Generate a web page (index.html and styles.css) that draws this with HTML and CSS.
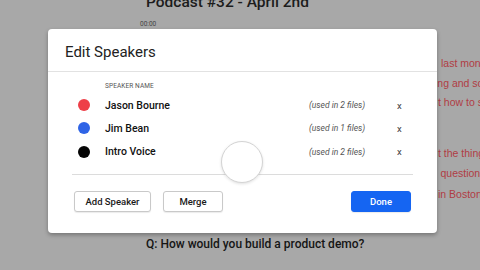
FILE: index.html
```html
<!DOCTYPE html>
<html>
<head>
<meta charset="utf-8">
<link rel="stylesheet" href="styles.css">
</head>
<body>
<div class="page">
  <div class="title">Podcast #32 - April 2nd</div>
  <div class="time">00:00</div>
  <div class="transcript group1">
    <div class="line l1">last month we talked</div>
    <div class="line l2">ing and some</div>
    <div class="line l3">t how to say</div>
  </div>
  <div class="transcript group2">
    <div class="line l4">t the things</div>
    <div class="line l5">question</div>
    <div class="line l6">in Boston</div>
  </div>
  <div class="question">Q: How would you build a product demo?</div>
</div>

<div class="modal">
  <div class="modal-header">Edit Speakers</div>
  <div class="modal-body">
    <div class="col-label">SPEAKER NAME</div>
    <div class="row">
      <span class="dot red"></span>
      <span class="name">Jason Bourne</span>
      <span class="usage">(used in 2 files)</span>
      <span class="remove">x</span>
    </div>
    <div class="row">
      <span class="dot blue"></span>
      <span class="name">Jim Bean</span>
      <span class="usage">(used in 1 files)</span>
      <span class="remove">x</span>
    </div>
    <div class="row">
      <span class="dot black"></span>
      <span class="name">Intro Voice</span>
      <span class="usage">(used in 2 files)</span>
      <span class="remove">x</span>
    </div>
    <div class="divider"></div>
  </div>
  <div class="modal-footer">
    <button class="btn add">Add Speaker</button>
    <button class="btn merge">Merge</button>
    <span class="spacer"></span>
    <button class="btn done">Done</button>
  </div>
  <div class="touch"></div>
</div>
</body>
</html>
```
FILE: styles.css
```css
html, body {
  margin: 0;
  padding: 0;
}
body {
  width: 480px;
  height: 270px;
  overflow: hidden;
  background: #a8a8a8;
  font-family: Roboto, "Liberation Sans", sans-serif;
  position: relative;
}
.page {
  padding-left: 146px;
  display: flex;
  flex-direction: column;
}
.title {
  font-size: 15.5px;
  line-height: 20px;
  font-weight: 500;
  color: #1c1c1c;
  margin-top: -8px;
  white-space: nowrap;
}
.time {
  font-size: 6.5px;
  line-height: 10px;
  color: #444;
  margin-top: 7px;
  margin-left: -6px;
}
.transcript {
  font-family: "Liberation Sans", Arial, sans-serif;
  font-size: 10.5px;
  color: #b03c44;
  white-space: nowrap;
}
.group1 {
  line-height: 19.5px;
  margin-top: 25px;
}
.group2 {
  line-height: 20.5px;
  margin-top: 30px;
}
.l1 { padding-left: 295px; }
.l2 { padding-left: 289px; }
.l3 { padding-left: 292px; }
.l4 { padding-left: 292px; }
.l5 { padding-left: 294.5px; }
.l6 { padding-left: 292px; }
.question {
  font-size: 12px;
  line-height: 16px;
  font-weight: 500;
  color: #151515;
  margin-top: 31.5px;
  white-space: nowrap;
}

.modal {
  position: absolute;
  left: 48px;
  top: 29px;
  width: 389px;
  height: 204px;
  background: #fff;
  border-radius: 4px;
  box-shadow: 0 2px 4px rgba(0,0,0,0.3);
  display: flex;
  flex-direction: column;
  color: #1a1a1a;
}
.modal-header {
  height: 38px;
  padding-top: 4px;
  padding-left: 17px;
  display: flex;
  align-items: center;
  font-size: 15px;
  color: #222;
  border-bottom: 1px solid #e2e2e2;
}
.modal-body {
  padding: 0 24px;
  display: flex;
  flex-direction: column;
}
.col-label {
  font-size: 6.5px;
  line-height: 8px;
  color: #555;
  margin-top: 9.5px;
  padding-left: 33px;
  letter-spacing: 0.1px;
  margin-bottom: 4px;
}
.row {
  height: 23.3px;
  display: flex;
  align-items: center;
  padding-left: 6px;
}
.dot {
  width: 12px;
  height: 12px;
  border-radius: 50%;
  margin-right: 15px;
  flex: none;
}
.red { background: #ee3f48; }
.blue { background: #2f64e6; }
.black { background: #050505; }
.name {
  width: 204px;
  font-size: 10.5px;
  font-weight: 500;
  color: #111;
}
.usage {
  width: 88px;
  font-size: 8.5px;
  font-style: italic;
  color: #555;
}
.remove {
  font-size: 9.5px;
  color: #444;
}
.divider {
  height: 1px;
  background: #dcdcdc;
  margin-top: 10.5px;
}
.modal-footer {
  display: flex;
  padding: 0 26px;
  margin-top: 16.5px;
  gap: 12px;
}
.spacer {
  flex: 1;
}
.btn {
  height: 21px;
  border: 1px solid #c9c9c9;
  border-radius: 3px;
  background: #fff;
  font-family: Roboto, "Liberation Sans", sans-serif;
  font-size: 9.5px;
  font-weight: 500;
  color: #1a1a1a;
  padding: 0;
  box-shadow: 0 1px 1px rgba(0,0,0,0.08);
}
.add { width: 77px; }
.merge { width: 60px; }
.done {
  width: 60px;
  background: #1565f2;
  border-color: #1565f2;
  color: #fff;
}
.touch {
  position: absolute;
  left: 173px;
  top: 112px;
  width: 40px;
  height: 40px;
  border-radius: 50%;
  background: #fff;
  border: 1px solid #d4d4d4;
  box-shadow: 0 1px 3px rgba(0,0,0,0.12);
}
```
